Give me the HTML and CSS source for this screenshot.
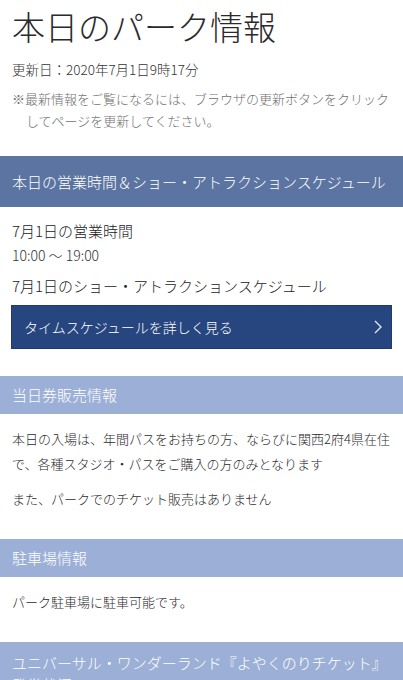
FILE: index.html
```html
<!DOCTYPE html>
<html lang="ja">
<head>
<meta charset="utf-8">
<title>本日のパーク情報</title>
<link rel="stylesheet" href="styles.css">
</head>
<body>
<header class="page-head">
  <h1 class="title">本日のパーク情報</h1>
  <p class="updated">更新日：2020年7月1日9時17分</p>
  <p class="note">※最新情報をご覧になるには、ブラウザの更新ボタンをクリックしてページを更新してください。</p>
</header>

<section class="section">
  <h2 class="bar bar-main">本日の営業時間＆ショー・アトラクションスケジュール</h2>
  <div class="body body-first">
    <h3 class="sub">7月1日の営業時間</h3>
    <p class="time">10:00 ～ 19:00</p>
    <h3 class="sub sub-gap">7月1日のショー・アトラクションスケジュール</h3>
    <a class="btn" href="#">
      <span>タイムスケジュールを詳しく見る</span>
      <svg class="chev" width="8" height="14" viewBox="0 0 8 14"><polyline points="1,1 7,7 1,13" fill="none" stroke="#dfe6f2" stroke-width="1.4"/></svg>
    </a>
  </div>
</section>

<section class="section">
  <h2 class="bar bar-light">当日券販売情報</h2>
  <div class="body">
    <p class="text">本日の入場は、年間パスをお持ちの方、ならびに関西2府4県在住で、各種スタジオ・パスをご購入の方のみとなります</p>
    <p class="text text-gap">また、パークでのチケット販売はありません</p>
  </div>
</section>

<section class="section">
  <h2 class="bar bar-light">駐車場情報</h2>
  <div class="body">
    <p class="text">パーク駐車場に駐車可能です。</p>
  </div>
</section>

<section class="section">
  <h2 class="bar bar-light bar-wrap">ユニバーサル・ワンダーランド『よやくのりチケット』発券状況</h2>
</section>
</body>
</html>
```

FILE: styles.css
```css
* { box-sizing: border-box; }
html, body { margin: 0; padding: 0; }
body {
  width: 403px;
  background: #fff;
  color: #2b2b2b;
  font-family: "Noto Sans CJK JP", "Noto Sans", sans-serif;
  font-weight: 300;
}
h1, h2, h3, p { margin: 0; font-weight: 300; }

.page-head { padding: 6px 12px 0; }
.title {
  font-size: 33px;
  line-height: 40px;
  color: #2a2a2a;
}
.updated {
  margin-top: 13px;
  font-size: 13.5px;
  line-height: 20px;
  color: #333;
}
.note {
  margin-top: 9px;
  font-size: 13px;
  line-height: 22px;
  color: #707070;
  padding-left: 14px;
  text-indent: -14px;
}

.page-head + .section { margin-top: 24px; }

.bar {
  color: #fff;
  font-size: 15px;
  padding: 8px 12px;
  line-height: 22px;
}
.bar-main {
  background: #5b74a1;
  padding: 14px 12px;
  line-height: 23px;
}
.bar-light {
  background: #9cafd6;
}
.bar-wrap { padding-top: 10px; }

.body { padding: 12px 12px 28px; }
.body-first { padding-top: 13px; padding-bottom: 27px; }

.sub {
  font-size: 15px;
  line-height: 22px;
  color: #222;
}
.sub-gap { margin-top: 10px; }
.time {
  margin-top: 3px;
  font-size: 14px;
  line-height: 20px;
  color: #333;
}

.btn {
  margin: 8px -1px 0;
  height: 44px;
  background: #27467f;
  border: 1px solid #1f3a6c;
  color: #fff;
  text-decoration: none;
  display: flex;
  align-items: center;
  justify-content: space-between;
  padding: 0 9px 0 12px;
  font-size: 14px;
}
.chev { display: block; }

.text {
  font-size: 13px;
  line-height: 25px;
  color: #2b2b2b;
}
.text-gap { margin-top: 10px; }
```
